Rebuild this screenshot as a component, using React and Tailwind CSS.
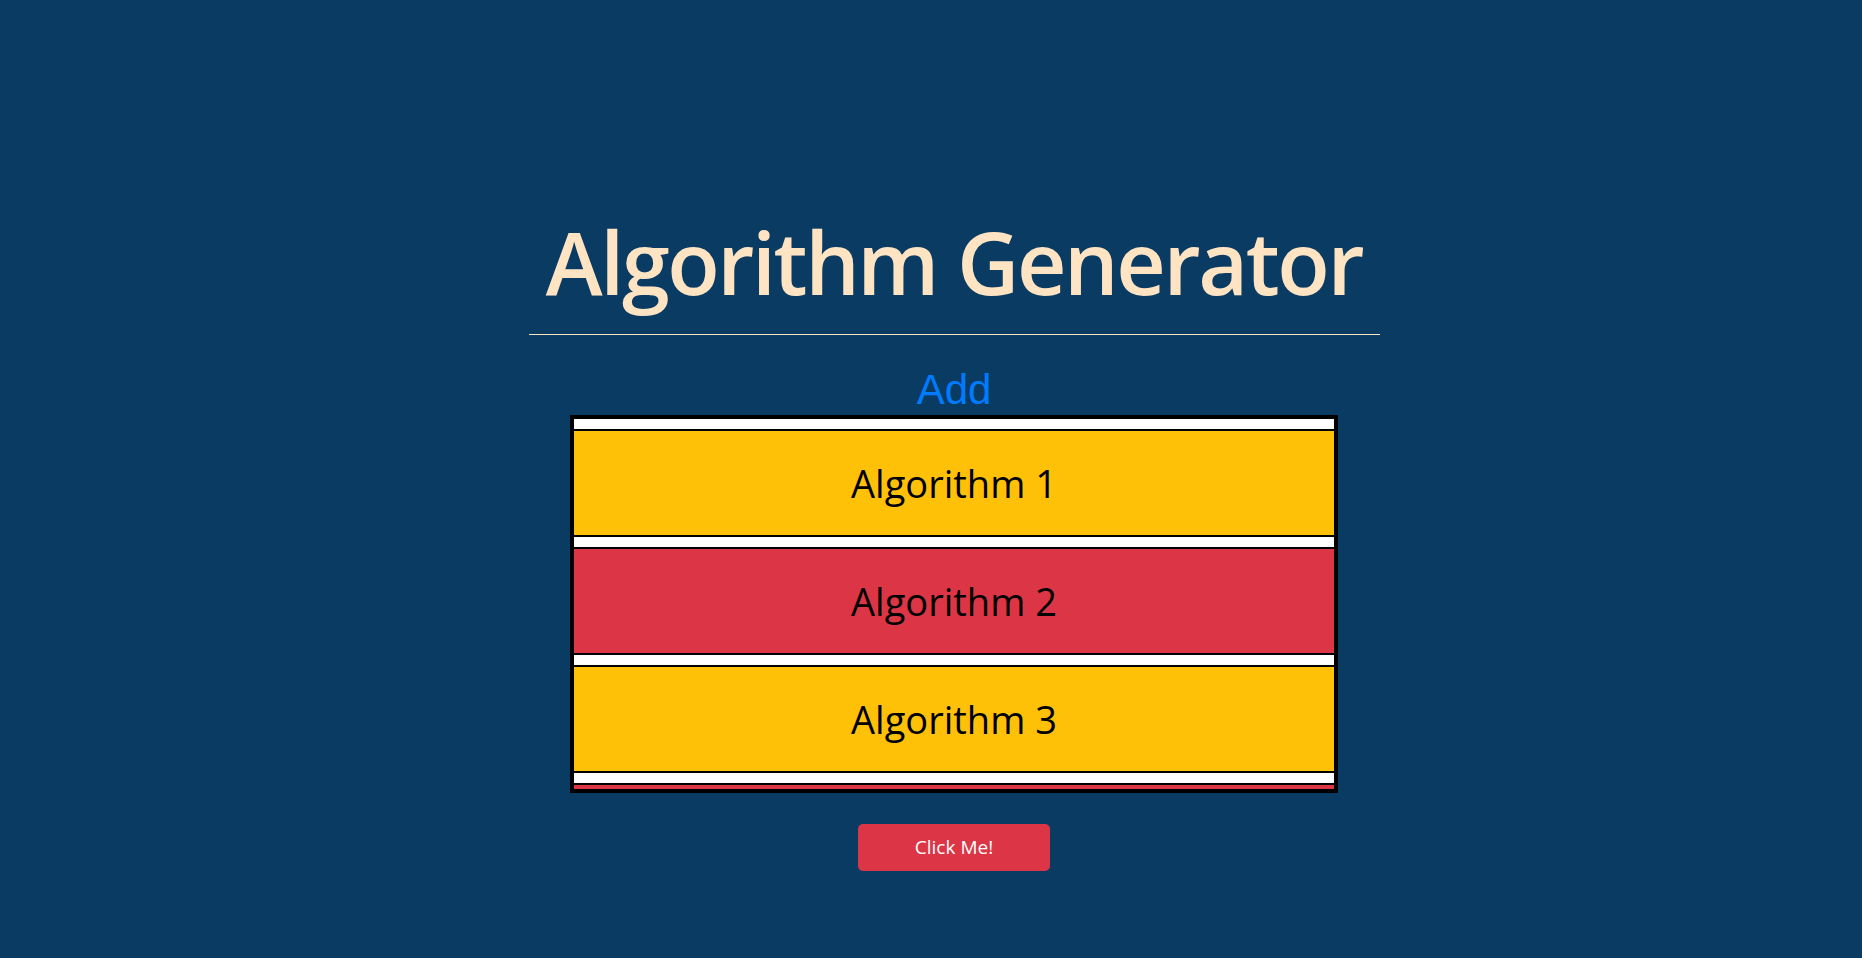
const algorithms = [
  { name: 'Algorithm 1', color: 'bg-[#ffc107]' },
  { name: 'Algorithm 2', color: 'bg-[#dc3545]' },
  { name: 'Algorithm 3', color: 'bg-[#ffc107]' },
  // last row only peeks out of the scroll box
  { name: '', color: 'bg-[#dc3545]' },
]

export default function App() {
  return (
    <div className="min-h-screen bg-[#0a3b63] pl-[46px] pt-[210px] flex flex-col items-center font-['Open_Sans',sans-serif]">
      {/* Title */}
      <h1 className="text-[86px] leading-[1.2] font-semibold tracking-[-2.4px] text-[#ffe4c4]">
        Algorithm Generator
      </h1>
      <div className="w-[851px] mt-[21px] border-t border-[#ffe4c4]" />

      {/* Add link */}
      <button className="mt-[34px] text-[42px] leading-none text-[#007bff] font-['Liberation_Sans',Arial,sans-serif]">
        Add
      </button>

      {/* Algorithm list */}
      <div className="mt-[4px] w-[768px] h-[378px] border-4 border-black bg-white overflow-hidden">
        {algorithms.map((a, i) => (
          <div
            key={i}
            className={`mt-[10px] h-[108px] border-y-2 border-black flex items-center justify-center text-[38px] text-black ${a.color}`}
          >
            {a.name}
          </div>
        ))}
      </div>

      <button className="mt-[31px] w-[192px] h-[47px] rounded-[5px] bg-[#dc3545] text-white text-[19px]">
        Click Me!
      </button>
    </div>
  )
}
